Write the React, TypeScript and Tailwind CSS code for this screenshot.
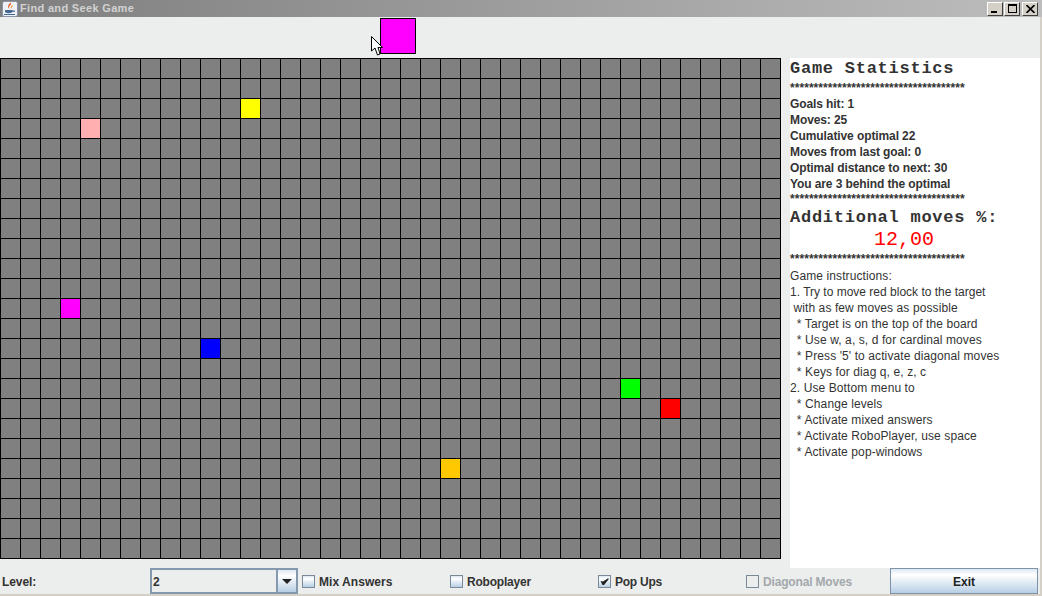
import React from "react";

const COLS = 39;
const ROWS = 25;
const colored: Record<string, string> = {
  "2-12": "bg-[#ffff00]",
  "3-4": "bg-[#ffafaf]",
  "12-3": "bg-[#ff00ff]",
  "14-10": "bg-[#0000ff]",
  "16-31": "bg-[#00ff00]",
  "17-33": "bg-[#ff0000]",
  "20-22": "bg-[#ffc800]",
};

const STARS = "*************************************";

function WinButton({ children }: { children: React.ReactNode }) {
  return (
    <div className="w-[16px] h-[14px] bg-[#d4d0c8] border border-t-white border-l-white border-r-[#404040] border-b-[#404040] flex items-center justify-center">
      {children}
    </div>
  );
}

function Check({ checked, disabled, label, className, labelClass }: { checked?: boolean; disabled?: boolean; label: string; className: string; labelClass: string }) {
  return (
    <div className={`flex items-center gap-[4px] pt-[1px] ${className}`}>
      <div
        className={`w-[13px] h-[13px] border border-[#7a8a99] flex items-center justify-center ${
          disabled ? "bg-[#eceeed]" : "bg-[linear-gradient(to_bottom,#dde8f3,#ffffff_25%,#b8cfe5)]"
        }`}
      >
        {checked && (
          <svg width="9" height="9" viewBox="0 0 9 9">
            <path d="M0.5 4 L3 4.5 L8.5 1 L8.5 2.5 L4 8 L2.5 8 Z" fill="#222" />
          </svg>
        )}
      </div>
      <span className={`text-[12px] font-bold ${labelClass} ${disabled ? "text-[#a3a8ac]" : "text-[#333333]"}`}>{label}</span>
    </div>
  );
}

export default function App() {
  return (
    <div
      className="w-[1042px] h-[596px] overflow-hidden relative bg-[#d4d0c8] flex flex-col pr-[2px] pb-[2px]"
      style={{ fontFamily: '"Liberation Sans", Arial, sans-serif' }}
    >
      {/* Title bar */}
      <div className="w-[1042px] -mr-[2px] h-[17px] shrink-0 flex items-center bg-gradient-to-r from-[#7f7f7f] to-[#bdbdbd] pl-[2px] pr-[4px]">
        <svg width="16" height="16" viewBox="0 0 16 16" className="shrink-0">
          <rect x="0.5" y="0.5" width="15" height="15" rx="2" fill="#eef1f5" stroke="#8a94a6" />
          <path d="M8.5 1.5 C10.5 4 5.5 5 7.5 8 C6 7 5 5 8.5 1.5 Z" fill="#e2571e" />
          <path d="M10.5 4 C11.5 5.5 8.5 6.5 9.5 8 C8 7 8.5 5.5 10.5 4 Z" fill="#f08a2a" />
          <path d="M3 9 H10.5 V10.5 C10.5 11.8 9 12.2 6.8 12.2 C4.5 12.2 3 11.8 3 10.5 Z M10.5 9.5 H13 V10.8 H10.5 Z M2 13 H13 V14 H2 Z" fill="#44678f" />
        </svg>
        <span className="ml-[2px] text-[11px] font-bold text-[#d2d2d2] leading-[17px] tracking-[0.33px]">Find and Seek Game</span>
        <div className="ml-auto flex">
          <WinButton>
            <div className="w-[6px] h-[2px] bg-black mt-[7px] -ml-[2px]" />
          </WinButton>
          <div className="ml-[1px] mr-[2px]">
            <WinButton>
              <div className="w-[9px] h-[9px] border border-black border-t-2" />
            </WinButton>
          </div>
          <WinButton>
            <svg width="9" height="8" viewBox="0 0 9 8">
              <path d="M0.5 0 L8.5 8 M8.5 0 L0.5 8" stroke="#000" strokeWidth="1.6" />
            </svg>
          </WinButton>
        </div>
      </div>

      {/* Body */}
      <div className="flex-1 bg-[#eceeed] flex flex-col min-h-0">
        {/* Target strip */}
        <div className="h-[41px] shrink-0 pl-[380px] pt-[1px]">
          <div className="w-[36px] h-[36px] bg-[#ff00ff] border border-black" />
        </div>

        <div className="flex h-[510px] shrink-0">
          {/* Board */}
          <div className="w-[790px] shrink-0">
            <div className="w-[781px] h-[501px] bg-black grid gap-px p-px grid-cols-[repeat(39,19px)] grid-rows-[repeat(25,19px)]">
              {Array.from({ length: ROWS * COLS }, (_, i) => {
                const r = Math.floor(i / COLS);
                const c = i % COLS;
                return <div key={i} className={colored[`${r}-${c}`] ?? "bg-[#808080]"} />;
              })}
            </div>
          </div>

          {/* Stats panel */}
          <div className="w-[250px] bg-white text-[#333333] text-[12px] leading-[16px]">
            <div className="h-[22px] text-[17px] leading-[22px] font-bold whitespace-pre tracking-[0.75px]" style={{ fontFamily: '"Liberation Mono", monospace' }}>
              Game Statistics
            </div>
            <div className="font-bold whitespace-pre tracking-[0.05px]">{STARS}</div>
            <div className="font-bold tracking-[-0.1px]">
              <div>Goals hit: 1</div>
              <div>Moves: 25</div>
              <div>Cumulative optimal 22</div>
              <div>Moves from last goal: 0</div>
              <div>Optimal distance to next: 30</div>
              <div>You are 3 behind the optimal</div>
            </div>
            <div className="h-[16px] leading-[14px] font-bold whitespace-pre tracking-[0.05px]">{STARS}</div>
            <div className="h-[20px] text-[17px] leading-[20px] font-bold whitespace-pre tracking-[0.75px]" style={{ fontFamily: '"Liberation Mono", monospace' }}>
              Additional moves %:
            </div>
            <div className="h-[24px] text-center text-[20px] leading-[24px] text-[#ff0000] w-[228px]" style={{ fontFamily: '"Liberation Mono", monospace' }}>
              12,00
            </div>
            <div className="h-[16px] leading-[14px] font-bold whitespace-pre tracking-[0.05px]">{STARS}</div>
            <div className="whitespace-pre tracking-[0.1px]">
              <div>Game instructions:</div>
              <div className="tracking-normal">1. Try to move red block to the target</div>
              <div> with as few moves as possible</div>
              <div>  * Target is on the top of the board</div>
              <div>  * Use w, a, s, d for cardinal moves</div>
              <div>  * Press '5' to activate diagonal moves</div>
              <div>  * Keys for diag q, e, z, c</div>
              <div>2. Use Bottom menu to</div>
              <div>  * Change levels</div>
              <div>  * Activate mixed answers</div>
              <div>  * Activate RoboPlayer, use space</div>
              <div>  * Activate pop-windows</div>
            </div>
          </div>
        </div>

        {/* Bottom controls */}
        <div className="flex-1 flex items-stretch min-h-0">
          <div className="w-[150px] pl-[2px] pt-[1px] flex items-center text-[12px] font-bold tracking-[-0.1px] text-[#333333]">Level:</div>
          <div className="w-[148px] flex border-2 border-[#8599ae]">
            <div className="flex-1 bg-[#eceeed] text-[12px] font-bold text-[#333333] flex items-center pl-[1px] pt-[1px] border-r-2 border-[#8599ae]">2</div>
            <div className="w-[18px] bg-[linear-gradient(to_bottom,#dde8f3,#ffffff_25%,#b8cfe5)] flex items-center justify-center">
              <svg width="10" height="5" viewBox="0 0 10 5"><path d="M0 0 H10 L5 5 Z" fill="#222" /></svg>
            </div>
          </div>
          <Check label="Mix Answers" labelClass="tracking-[0.05px]" className="w-[148px] ml-[4px]" />
          <Check label="Roboplayer" labelClass="tracking-[-0.2px]" className="w-[148px]" />
          <Check checked label="Pop Ups" labelClass="tracking-[-0.25px]" className="w-[148px]" />
          <Check disabled label="Diagonal Moves" labelClass="tracking-[-0.17px]" className="w-[144px]" />
          <div className="w-[148px] pt-[1px] border border-[#7f92a8] bg-[linear-gradient(to_bottom,#dde8f3,#ffffff_25%,#b8cfe5)] flex items-center justify-center text-[12px] font-bold text-[#222222]">
            Exit
          </div>
        </div>
      </div>

      {/* Mouse cursor */}
      <svg width="14" height="21" viewBox="0 0 14 21" className="absolute left-[371px] top-[36px]">
        <path d="M0.5 0.5 V15 L4 12 L6.5 19 L9 18 L7 11.5 H11.5 Z" fill="#fff" stroke="#000" />
      </svg>
    </div>
  );
}
